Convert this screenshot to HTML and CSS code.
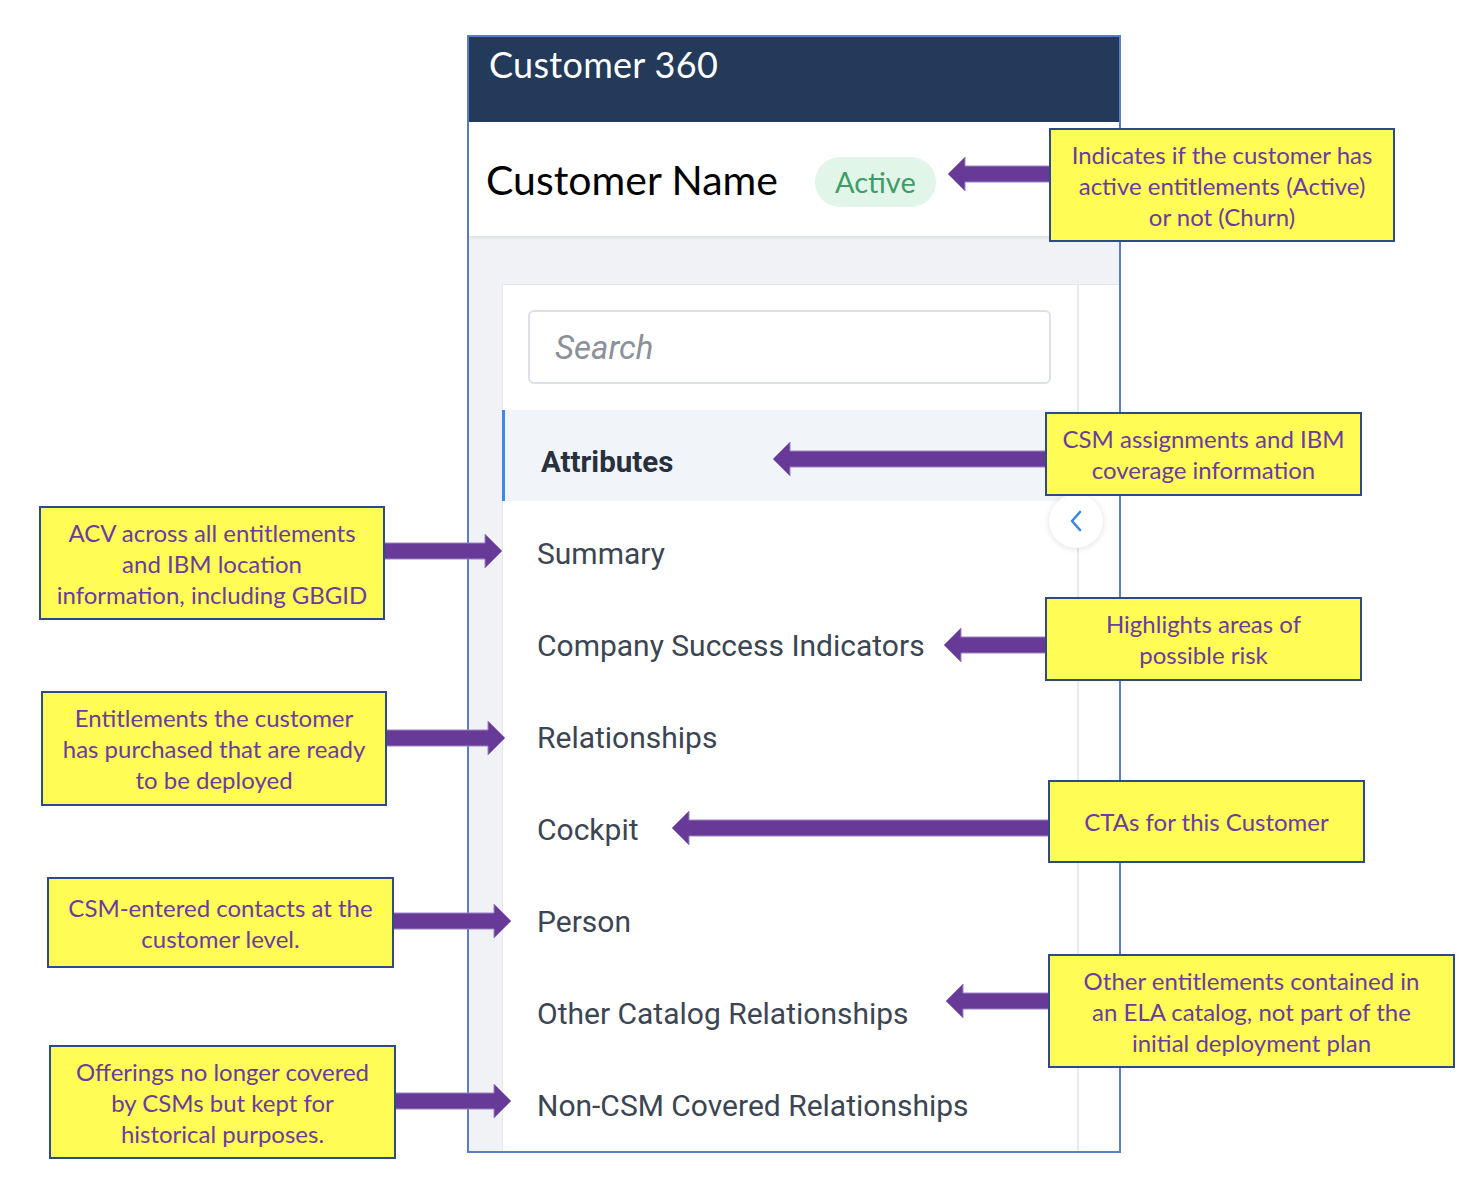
FILE: index.html
```html
<!DOCTYPE html>
<html lang="en">
<head>
  <meta charset="UTF-8">
  <meta name="viewport" content="width=device-width, initial-scale=1.0">
  <title>Customer 360 – annotated</title>
  <link rel="stylesheet" href="styles.css">
</head>
<body>
  <div class="stage">

    <!-- Screenshot of the Customer 360 panel -->
    <div class="panel">
      <div class="panel-top">Customer 360</div>
      <div class="name-row">
        <h1>Customer Name</h1>
        <span class="pill">Active</span>
      </div>
      <div class="panel-body">
        <div class="card">
          <div class="nav">
            <div class="search"><input type="text" placeholder="Search"></div>
            <ul class="menu">
              <li class="current">Attributes</li>
              <li>Summary</li>
              <li>Company Success Indicators</li>
              <li>Relationships</li>
              <li>Cockpit</li>
              <li>Person</li>
              <li>Other Catalog Relationships</li>
              <li>Non-CSM Covered Relationships</li>
            </ul>
          </div>
          <div class="rail"></div>
        </div>
        <button class="collapse" aria-label="Collapse">
          <svg width="14" height="22" viewBox="0 0 14 22"><path d="M11 2 L3 11 L11 20" fill="none" stroke="#3b86e0" stroke-width="2.6" stroke-linecap="round" stroke-linejoin="round"/></svg>
        </button>
      </div>
    </div>

    <!-- Arrows -->
    <svg class="arrows" width="1484" height="1200" viewBox="0 0 1484 1200">
      <g fill="#683a98" stroke="#9c82c6" stroke-width="1">
        <polygon points="948,174 965,157 965,166 1050,166 1050,182 965,182 965,191"/>
        <polygon points="773,459 790,442 790,451 1046,451 1046,467 790,467 790,476"/>
        <polygon points="502,551 485,534 485,543 384,543 384,559 485,559 485,568"/>
        <polygon points="944,645 961,628 961,637 1046,637 1046,653 961,653 961,662"/>
        <polygon points="505,738 488,721 488,730 386,730 386,746 488,746 488,755"/>
        <polygon points="672,828 689,811 689,820 1049,820 1049,836 689,836 689,845"/>
        <polygon points="511,921 494,904 494,913 393,913 393,929 494,929 494,938"/>
        <polygon points="946,1001 963,984 963,993 1049,993 1049,1009 963,1009 963,1018"/>
        <polygon points="511,1101 494,1084 494,1093 395,1093 395,1109 494,1109 494,1118"/>
      </g>
    </svg>

    <!-- Callouts -->
    <div class="note" style="left:1049px;top:128px;width:346px;height:114px">Indicates if the customer has<br>active entitlements (Active)<br>or not (Churn)</div>
    <div class="note" style="left:1045px;top:412px;width:317px;height:84px">CSM assignments and IBM<br>coverage information</div>
    <div class="note" style="left:39px;top:506px;width:346px;height:114px">ACV across all entitlements<br>and IBM location<br>information, including GBGID</div>
    <div class="note" style="left:1045px;top:597px;width:317px;height:84px">Highlights areas of<br>possible risk</div>
    <div class="note" style="left:41px;top:691px;width:346px;height:115px">Entitlements the customer<br>has purchased that are ready<br>to be deployed</div>
    <div class="note" style="left:1048px;top:780px;width:317px;height:83px">CTAs for this Customer</div>
    <div class="note" style="left:47px;top:877px;width:347px;height:91px">CSM-entered contacts at the<br>customer level.</div>
    <div class="note" style="left:1048px;top:954px;width:407px;height:114px">Other entitlements contained in<br>an ELA catalog, not part of the<br>initial deployment plan</div>
    <div class="note" style="left:49px;top:1045px;width:347px;height:114px">Offerings no longer covered<br>by CSMs but kept for<br>historical purposes.</div>

  </div>
</body>
</html>
```

FILE: styles.css
```css
/* Page */
body {
  margin: 0;
  background: #fff;
  font-family: Roboto, "Liberation Sans", sans-serif;
}

.stage {
  position: relative;
  width: 1484px;
  height: 1200px;
  overflow: hidden;
}

/* Panel */
.panel {
  margin: 35px 0 0 467px;
  width: 650px;
  height: 1114px;
  border: 2px solid #5a7dc6;
  display: flex;
  flex-direction: column;
  background: #fff;
}

.panel-top {
  height: 85px;
  flex-shrink: 0;
  background: #233a5b;
  color: #fff;
  font-family: Lato, "Open Sans", sans-serif;
  font-size: 36px;
  line-height: 40px;
  padding: 7px 0 0 20px;
  box-sizing: border-box;
  letter-spacing: 0.3px;
}

.name-row {
  height: 114px;
  flex-shrink: 0;
  display: flex;
  align-items: center;
  gap: 37px;
  padding-left: 17px;
  box-sizing: border-box;
  background: #fff;
  box-shadow: 0 2px 3px rgba(0, 0, 0, 0.08);
  position: relative;
  z-index: 1;
}

.name-row h1 {
  margin: 0;
  font-family: Lato, "Open Sans", sans-serif;
  font-weight: 400;
  font-size: 41px;
  color: #000;
  padding-top: 0;
}

.pill {
  height: 50px;
  padding: 0 20px;
  border-radius: 25px;
  background: #e2f5e9;
  color: #3f9c69;
  font-family: Lato, "Open Sans", sans-serif;
  font-size: 29px;
  line-height: 50px;
  margin-top: 5px;
}

.panel-body {
  flex: 1;
  position: relative;
  background: #f0f2f5;
  padding: 48px 0 0 33px;
  display: flex;
  min-height: 0;
}

.card {
  flex: 1;
  display: flex;
  background: #fff;
  border-top: 1px solid #e4e7ec;
  border-left: 1px solid #e4e7ec;
}

.nav {
  width: 574px;
  border-right: 2px solid #e7eaef;
}

.rail {
  flex: 1;
}

.search {
  padding: 25px 26px 26px 25px;
}

.search input {
  width: 100%;
  height: 74px;
  box-sizing: border-box;
  border: 2px solid #dde1e7;
  border-radius: 6px;
  padding: 0 0 0 25px;
  font-family: Roboto, sans-serif;
  font-style: italic;
  font-size: 33px;
  color: #333;
  outline: none;
}

.search input::placeholder {
  color: #8b9099;
}

.menu {
  list-style: none;
  margin: 0;
  padding: 0;
}

.menu li {
  height: 92px;
  box-sizing: border-box;
  display: flex;
  align-items: center;
  padding: 13px 0 0 32px;
  font-size: 30px;
  color: #3c4552;
  border-left: 3px solid transparent;
  margin-left: -1px;
}

.menu li.current {
  height: 91px;
  background: #f1f4f9;
  border-left-color: #4089e2;
  font-weight: 700;
  font-size: 29.5px;
  color: #27303d;
  padding-left: 36px;
}

.collapse {
  position: absolute;
  left: 580px;
  top: 258px;
  width: 54px;
  height: 54px;
  border: none;
  border-radius: 50%;
  background: #fff;
  box-shadow: 0 1px 6px rgba(0, 0, 0, 0.13);
  display: flex;
  align-items: center;
  justify-content: center;
  padding: 0;
  cursor: pointer;
}

/* Annotations */
.arrows {
  position: absolute;
  left: 0;
  top: 0;
  z-index: 2;
  pointer-events: none;
}

.note {
  position: absolute;
  z-index: 3;
  box-sizing: border-box;
  border: 2px solid #2f4a8b;
  background: #fffc55;
  color: #6a3c9f;
  font-family: Lato, "Open Sans", sans-serif;
  font-size: 24px;
  line-height: 31px;
  text-align: center;
  display: flex;
  align-items: center;
  justify-content: center;
}
```
